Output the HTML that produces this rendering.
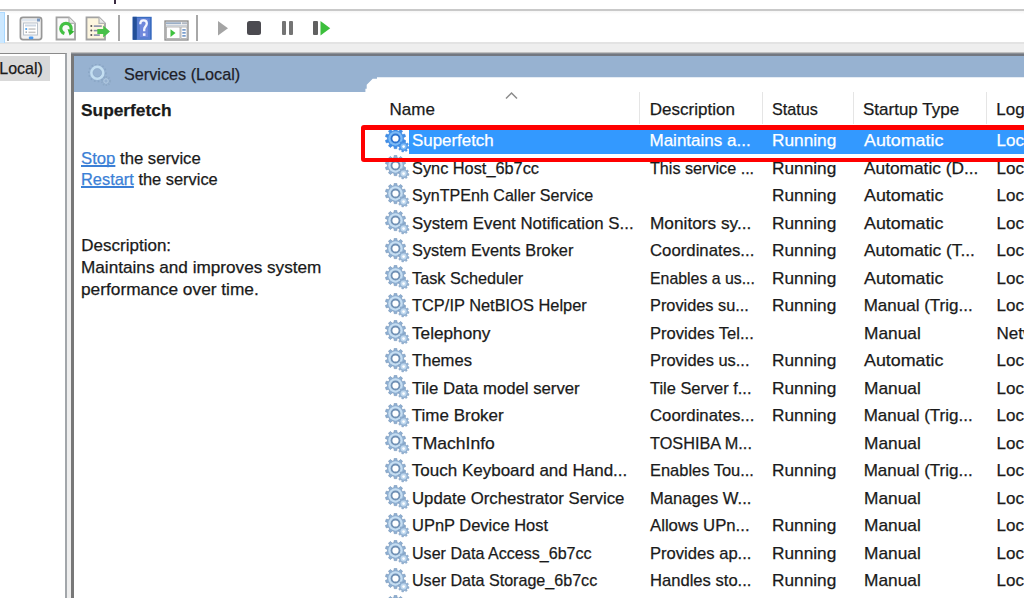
<!DOCTYPE html>
<html><head><meta charset="utf-8">
<style>
*{margin:0;padding:0;box-sizing:border-box}
html,body{width:1024px;height:598px;overflow:hidden;background:#eeeeee;font-family:"Liberation Sans",sans-serif;font-size:17px;position:relative}
.a{position:absolute}
.t{position:absolute;white-space:nowrap;line-height:20px;font-size:17px;transform-origin:0 0;-webkit-text-stroke:0.25px currentColor}
.lk{color:#3b7fd6;text-decoration:underline;text-decoration-thickness:1.6px;text-underline-offset:1.2px;text-decoration-skip-ink:none}
svg.g{position:absolute;width:25px;height:25px;overflow:visible}
</style></head><body>
<svg width="0" height="0" style="position:absolute">
<defs>
 <symbol id="gear" viewBox="0 0 25 25">
  <path d="M9.00 2.64L9.22 0.38L11.78 0.38L12.00 2.64L13.91 3.26L15.41 1.56L17.48 3.06L16.33 5.02L17.51 6.65L19.73 6.16L20.52 8.59L18.44 9.50L18.44 11.50L20.52 12.41L19.73 14.84L17.51 14.35L16.33 15.98L17.48 17.94L15.41 19.44L13.91 17.74L12.00 18.36L11.78 20.62L9.22 20.62L9.00 18.36L7.09 17.74L5.59 19.44L3.52 17.94L4.67 15.98L3.49 14.35L1.27 14.84L0.48 12.41L2.56 11.50L2.56 9.50L0.48 8.59L1.27 6.16L3.49 6.65L4.67 5.02L3.52 3.06L5.59 1.56L7.09 3.26Z" fill="#8fb0d3" stroke="#7898bc" stroke-width="0.7"/>
  <circle cx="10.5" cy="10.5" r="7.2" fill="#c6def2"/>
  <circle cx="10.5" cy="10.5" r="4.9" fill="#7191b5"/>
  <circle cx="10.5" cy="10.5" r="3.1" fill="#fff"/>
  <path d="M22.70 18.45L24.00 18.83L23.66 20.49L22.32 20.33L21.60 21.39L22.25 22.58L20.84 23.51L20.01 22.45L18.75 22.70L18.37 24.00L16.71 23.66L16.87 22.32L15.81 21.60L14.62 22.25L13.69 20.84L14.75 20.01L14.50 18.75L13.20 18.37L13.54 16.71L14.88 16.87L15.60 15.81L14.95 14.62L16.36 13.69L17.19 14.75L18.45 14.50L18.83 13.20L20.49 13.54L20.33 14.88L21.39 15.60L22.58 14.95L23.51 16.36L22.45 17.19Z" fill="#93b3d4" stroke="#7898bc" stroke-width="0.5"/>
  <circle cx="18.6" cy="18.6" r="3" fill="#c0d8ee"/>
  <circle cx="18.6" cy="18.6" r="1.3" fill="#fff"/>
 </symbol>
 <symbol id="gs" viewBox="0 0 25 25">
  <path d="M9.00 2.64L9.22 0.38L11.78 0.38L12.00 2.64L13.91 3.26L15.41 1.56L17.48 3.06L16.33 5.02L17.51 6.65L19.73 6.16L20.52 8.59L18.44 9.50L18.44 11.50L20.52 12.41L19.73 14.84L17.51 14.35L16.33 15.98L17.48 17.94L15.41 19.44L13.91 17.74L12.00 18.36L11.78 20.62L9.22 20.62L9.00 18.36L7.09 17.74L5.59 19.44L3.52 17.94L4.67 15.98L3.49 14.35L1.27 14.84L0.48 12.41L2.56 11.50L2.56 9.50L0.48 8.59L1.27 6.16L3.49 6.65L4.67 5.02L3.52 3.06L5.59 1.56L7.09 3.26Z" fill="#3f8ee8" stroke="#3a84dc" stroke-width="0.7"/>
  <circle cx="10.5" cy="10.5" r="7.2" fill="#7cbaf6"/>
  <circle cx="10.5" cy="10.5" r="4.9" fill="#2e74d0"/>
  <circle cx="10.5" cy="10.5" r="3.1" fill="#fff"/>
  <path d="M22.70 18.45L24.00 18.83L23.66 20.49L22.32 20.33L21.60 21.39L22.25 22.58L20.84 23.51L20.01 22.45L18.75 22.70L18.37 24.00L16.71 23.66L16.87 22.32L15.81 21.60L14.62 22.25L13.69 20.84L14.75 20.01L14.50 18.75L13.20 18.37L13.54 16.71L14.88 16.87L15.60 15.81L14.95 14.62L16.36 13.69L17.19 14.75L18.45 14.50L18.83 13.20L20.49 13.54L20.33 14.88L21.39 15.60L22.58 14.95L23.51 16.36L22.45 17.19Z" fill="#4a96ea" stroke="#3a84dc" stroke-width="0.5"/>
  <circle cx="18.6" cy="18.6" r="3" fill="#80bcf6"/>
  <circle cx="18.6" cy="18.6" r="1.3" fill="#fff"/>
 </symbol>
</defs>
</svg>

<!-- top strip (menu bar remnant) -->
<div class="a" style="left:0;top:0;width:1024px;height:9px;background:#fff"></div>
<div class="a" style="left:114px;top:0;width:2px;height:4px;background:#3a2a40"></div>
<div class="a" style="left:0;top:9px;width:1024px;height:2px;background:#c9c9c9"></div>
<!-- toolbar -->
<div class="a" style="left:0;top:11px;width:1024px;height:31px;background:linear-gradient(#f6f6f6,#fff 3px)"></div>
<div class="a" style="left:0;top:42px;width:1024px;height:2px;background:#e3e3e3"></div>
<div class="a" style="left:0;top:44px;width:1024px;height:9px;background:#eeeeee"></div>
<div class="a" style="left:0;top:12px;width:4.5px;height:30.5px;background:#cce8ff;border-right:1px solid #a8d8ff;border-top:1px solid #b0dbff"></div>
<div class="a" style="left:6.8px;top:15px;width:1.8px;height:26px;background:#a4a4a4"></div>
<div class="a" style="left:118px;top:15px;width:2px;height:26px;background:#a8a8a8"></div>
<div class="a" style="left:196px;top:15px;width:2px;height:26px;background:#a8a8a8"></div>
<!-- icon1 properties -->
<svg class="a" style="left:19px;top:16px" width="24" height="25" viewBox="0 0 24 25">
 <rect x="1.4" y="1.3" width="21.2" height="22.4" rx="2.6" fill="#f3f3f3" stroke="#979797" stroke-width="1.7"/>
 <rect x="3" y="3" width="15" height="2" fill="#dfe6ee"/>
 <rect x="18" y="2.5" width="3" height="3" fill="#7a98c0"/>
 <rect x="4.5" y="7" width="14" height="12" fill="#fff" stroke="#b9c2cc" stroke-width="1"/>
 <rect x="6" y="8.5" width="11" height="2" fill="#cdd7e3"/>
 <circle cx="7.2" cy="13" r="1.1" fill="#4aa0f0"/>
 <rect x="9.5" y="12.3" width="7" height="1.5" fill="#c4c4c4"/>
 <rect x="6.6" y="15.4" width="1.2" height="1.5" fill="#909090"/>
 <rect x="9.5" y="15.6" width="7" height="1.5" fill="#c4c4c4"/>
 <rect x="9.8" y="20.4" width="4.6" height="2.8" rx="1.2" fill="#4b9af0"/>
</svg>
<!-- icon2 refresh -->
<svg class="a" style="left:55px;top:16px" width="22" height="25" viewBox="0 0 22 25">
 <path d="M1.5 1.3H14L20 7.3V23.5H1.5Z" fill="#fafafa" stroke="#a2a2a2" stroke-width="1.8"/>
 <path d="M14 1.3V7.3H20" fill="#e6e6e6" stroke="#b4b4b4" stroke-width="1.2"/>
 <path d="M9.42 17.49A5.2 5.2 0 1 1 15.6 14.9" fill="none" stroke="#44c044" stroke-width="3.2"/>
 <path d="M12.6 13.0L19.3 15.4L14.6 19.6Z" fill="#33b533"/>
</svg>
<!-- icon3 export -->
<svg class="a" style="left:85px;top:16px" width="27" height="25" viewBox="0 0 27 25">
 <path d="M1.5 1.3H14L20 7.3V23.5H1.5Z" fill="#fdf6df" stroke="#a2a2a2" stroke-width="1.8"/>
 <path d="M14 1.3V7.3H20" fill="#e8e8e8" stroke="#b4b4b4" stroke-width="1.2"/>
 <circle cx="6.3" cy="10" r="1" fill="#505050"/>
 <circle cx="6.3" cy="14.5" r="1" fill="#505050"/>
 <circle cx="6.3" cy="19" r="1" fill="#505050"/>
 <rect x="8.8" y="9.3" width="8" height="1.6" fill="#8a90a8"/>
 <rect x="8.8" y="13.8" width="6" height="1.6" fill="#8a90a8"/>
 <rect x="8.8" y="18.3" width="6" height="1.6" fill="#8a90a8"/>
 <path d="M12.3 13H18.2V9.6L25 15.5L18.2 21.4V18H12.3Z" fill="#48c048"/>
</svg>
<!-- help -->
<svg class="a" style="left:132px;top:16px" width="21" height="25" viewBox="0 0 21 25">
 <rect x="0.7" y="0.8" width="19" height="23" fill="#3a6cc0"/>
 <rect x="0.7" y="0.8" width="4" height="23" fill="#234f98"/>
 <rect x="5" y="2" width="13" height="21" fill="#5a7ed2"/>
 <rect x="8" y="3" width="8" height="18" fill="#7088dc"/>
 <path d="M8.3 8.2C8.3 5.6 9.8 4.3 11.5 4.3C13.4 4.3 14.8 5.6 14.8 7.6C14.8 10.3 12.2 10.8 12.2 13.4V15.2" fill="none" stroke="#f4f6ff" stroke-width="2.3"/>
 <rect x="10.9" y="17.3" width="2.6" height="2.6" fill="#f4f6ff"/>
</svg>
<!-- window w/ play -->
<svg class="a" style="left:164px;top:20px" width="25" height="21" viewBox="0 0 25 21">
 <rect x="1" y="1" width="23" height="19" fill="#eeeeee" stroke="#8a8a8a" stroke-width="1.3"/>
 <rect x="2" y="2.3" width="15" height="1.8" fill="#9aaec6"/>
 <rect x="18" y="2.3" width="5" height="1.8" fill="#b0b8c4"/>
 <rect x="2" y="5" width="21" height="1.2" fill="#c8d0da"/>
 <rect x="2.5" y="7" width="13.5" height="11.5" fill="#fff" stroke="#a8a8a8" stroke-width="0.8"/>
 <rect x="17" y="7" width="6" height="11.5" fill="#fff" stroke="#a8a8a8" stroke-width="0.8"/>
 <path d="M6.5 9.3L11.5 13L6.5 17Z" fill="#3fc23f"/>
 <rect x="18.3" y="9.2" width="3.4" height="1.4" fill="#5a86c0"/>
 <rect x="18.3" y="12.2" width="3.4" height="1.4" fill="#5a86c0"/>
 <rect x="18.3" y="15.2" width="3.4" height="1.4" fill="#5a86c0"/>
</svg>
<!-- play/stop/pause/resume -->
<svg class="a" style="left:217px;top:20px" width="12" height="17" viewBox="0 0 12 17"><path d="M1 1L11 8.3L1 15.5Z" fill="#a4a4a4"/></svg>
<div class="a" style="left:246.7px;top:21px;width:14.6px;height:14.3px;background:#4b4a50;border-radius:2.5px"></div>
<div class="a" style="left:281.6px;top:21px;width:4.5px;height:14.3px;background:#747474;border-radius:1px"></div>
<div class="a" style="left:288.7px;top:21px;width:4.5px;height:14.3px;background:#747474;border-radius:1px"></div>
<div class="a" style="left:313.3px;top:21px;width:4.8px;height:14.3px;background:#616161;border-radius:1px"></div>
<svg class="a" style="left:320px;top:20px" width="11" height="17" viewBox="0 0 11 17"><path d="M0.5 1L10.2 8.3L0.5 15.5Z" fill="#3cbf3c"/></svg>

<!-- left tree panel -->
<div class="a" style="left:0;top:53px;width:67px;height:545px;background:#fff;border-top:1px solid #8a8a8a;border-right:2px solid #a2a6aa"></div>
<div class="a" style="left:0;top:56px;width:50px;height:25px;background:#d9d9d9"></div>
<!-- main panel -->
<div class="a" style="left:71px;top:53px;width:953px;height:545px;background:#fff;border-left:3px solid #787878;border-top:3px solid #727780"></div>
<div class="a" style="left:71px;top:52px;width:953px;height:1px;background:#c0c0c0"></div>
<div class="a" style="left:71px;top:53px;width:953px;height:1px;background:#8c9096"></div>
<div class="a" style="left:74px;top:56px;width:950px;height:36px;background:#97b2d1"></div>
<div class="a" style="left:365px;top:77px;width:659px;height:521px;background:#fff;clip-path:polygon(12px 0.3px,100% 0.3px,100% 100%,0.4px 100%,0.4px 11.7px,1.7px 11.7px,1.7px 7.7px,7.7px 1.7px,12px 1.7px)"></div>
<svg class="a" style="left:88px;top:64px" width="24" height="24" viewBox="0 0 24 24">
 <circle cx="9.3" cy="8.8" r="8.6" fill="none" stroke="#86a2c2" stroke-width="1.6" stroke-dasharray="1.6 2.2" opacity="0.8"/>
 <circle cx="18" cy="17" r="4" fill="none" stroke="#8ea9c6" stroke-width="2.2" stroke-dasharray="1.3 1.3"/>
 <circle cx="18" cy="17" r="2.2" fill="none" stroke="#b4cce2" stroke-width="1"/>
 <circle cx="9.3" cy="8.8" r="5.8" fill="none" stroke="#c8e2f4" stroke-width="2.8" opacity="0.9"/>
 <circle cx="9.3" cy="8.8" r="4.3" fill="none" stroke="#8aa6c4" stroke-width="0.6"/>
</svg>
<div class="t" style="left:80.9px;top:101.4px;color:#1a1a1a;transform:scaleX(1.0191);font-weight:bold;">Superfetch</div>
<div class="t" style="left:124.0px;top:65.1px;color:#1e1e28;transform:scaleX(0.9533);">Services (Local)</div>
<div class="t" style="left:-72.0px;top:59.3px;color:#1a1a1a;transform:scaleX(0.9426);">Services (Local)</div>
<div class="t" style="left:81.0px;top:148.6px;color:#1a1a1a;transform:scaleX(0.9820);"><span class="lk">Stop</span> the service</div>
<div class="t" style="left:81.0px;top:170.3px;color:#1a1a1a;transform:scaleX(0.9648);"><span class="lk">Restart</span> the service</div>
<div class="t" style="left:81.3px;top:236.0px;color:#1a1a1a;">Description:</div>
<div class="t" style="left:81.0px;top:258.2px;color:#1a1a1a;transform:scaleX(1.0097);">Maintains and improves system</div>
<div class="t" style="left:81.0px;top:279.5px;color:#1a1a1a;transform:scaleX(1.0171);">performance over time.</div>
<!-- list header -->
<div class="a" style="left:639px;top:92px;width:1px;height:32px;background:#e5e5e5"></div>
<div class="a" style="left:762px;top:92px;width:1px;height:32px;background:#e5e5e5"></div>
<div class="a" style="left:853px;top:92px;width:1px;height:32px;background:#e5e5e5"></div>
<div class="a" style="left:986px;top:92px;width:1px;height:32px;background:#e5e5e5"></div>
<svg class="a" style="left:504px;top:91px" width="15" height="9" viewBox="0 0 15 9"><path d="M2 7.5L7.5 2L13 7.5" fill="none" stroke="#8c8c8c" stroke-width="1.5"/></svg>
<div class="t" style="left:389.6px;top:100.0px;color:#1a1a1a;">Name</div>
<div class="t" style="left:649.8px;top:100.3px;color:#1a1a1a;">Description</div>
<div class="t" style="left:772.3px;top:100.0px;color:#1a1a1a;transform:scaleX(0.9521);">Status</div>
<div class="t" style="left:863.0px;top:99.6px;color:#1a1a1a;">Startup Type</div>
<div class="t" style="left:996.3px;top:99.6px;color:#1a1a1a;">Log On As</div>
<!-- selection -->
<div class="a" style="left:409px;top:130px;width:615px;height:24px;background:#3399ff"></div>
<svg class="g" style="left:385px;top:127.7px"><use href="#gs"/></svg>
<div class="t" style="left:411.8px;top:131.0px;color:#ffffff;transform:scaleX(0.9939);">Superfetch</div>
<div class="t" style="left:649.5px;top:131.0px;color:#ffffff;">Maintains a...</div>
<div class="t" style="left:772.3px;top:131.0px;color:#ffffff;transform:scaleX(1.0143);">Running</div>
<div class="t" style="left:863.7px;top:131.0px;color:#ffffff;transform:scaleX(1.0500);">Automatic</div>
<div class="t" style="left:996.5px;top:131.0px;color:#ffffff;">Local System</div>
<svg class="g" style="left:385px;top:155.2px"><use href="#gear"/></svg>
<div class="t" style="left:411.8px;top:158.5px;color:#1a1a1a;transform:scaleX(0.9602);">Sync Host_6b7cc</div>
<div class="t" style="left:649.5px;top:158.5px;color:#1a1a1a;transform:scaleX(0.9500);">This service ...</div>
<div class="t" style="left:772.3px;top:158.5px;color:#1a1a1a;transform:scaleX(1.0143);">Running</div>
<div class="t" style="left:863.7px;top:158.5px;color:#1a1a1a;transform:scaleX(1.0170);">Automatic (D...</div>
<div class="t" style="left:996.5px;top:158.5px;color:#1a1a1a;">Local System</div>
<svg class="g" style="left:385px;top:182.7px"><use href="#gear"/></svg>
<div class="t" style="left:411.8px;top:186.0px;color:#1a1a1a;transform:scaleX(0.9453);">SynTPEnh Caller Service</div>
<div class="t" style="left:772.3px;top:186.0px;color:#1a1a1a;transform:scaleX(1.0143);">Running</div>
<div class="t" style="left:863.7px;top:186.0px;color:#1a1a1a;transform:scaleX(1.0500);">Automatic</div>
<div class="t" style="left:996.5px;top:186.0px;color:#1a1a1a;">Local System</div>
<svg class="g" style="left:385px;top:210.2px"><use href="#gear"/></svg>
<div class="t" style="left:411.8px;top:213.5px;color:#1a1a1a;transform:scaleX(0.9897);">System Event Notification S...</div>
<div class="t" style="left:649.5px;top:213.5px;color:#1a1a1a;transform:scaleX(1.0150);">Monitors sy...</div>
<div class="t" style="left:772.3px;top:213.5px;color:#1a1a1a;transform:scaleX(1.0143);">Running</div>
<div class="t" style="left:863.7px;top:213.5px;color:#1a1a1a;transform:scaleX(1.0500);">Automatic</div>
<div class="t" style="left:996.5px;top:213.5px;color:#1a1a1a;">Local System</div>
<svg class="g" style="left:385px;top:237.7px"><use href="#gear"/></svg>
<div class="t" style="left:411.8px;top:241.0px;color:#1a1a1a;transform:scaleX(0.9595);">System Events Broker</div>
<div class="t" style="left:649.5px;top:241.0px;color:#1a1a1a;transform:scaleX(0.9858);">Coordinates...</div>
<div class="t" style="left:772.3px;top:241.0px;color:#1a1a1a;transform:scaleX(1.0143);">Running</div>
<div class="t" style="left:863.7px;top:241.0px;color:#1a1a1a;transform:scaleX(1.0211);">Automatic (T...</div>
<div class="t" style="left:996.5px;top:241.0px;color:#1a1a1a;">Local System</div>
<svg class="g" style="left:385px;top:265.2px"><use href="#gear"/></svg>
<div class="t" style="left:411.8px;top:268.5px;color:#1a1a1a;transform:scaleX(0.9564);">Task Scheduler</div>
<div class="t" style="left:649.5px;top:268.5px;color:#1a1a1a;transform:scaleX(0.9330);">Enables a us...</div>
<div class="t" style="left:772.3px;top:268.5px;color:#1a1a1a;transform:scaleX(1.0143);">Running</div>
<div class="t" style="left:863.7px;top:268.5px;color:#1a1a1a;transform:scaleX(1.0500);">Automatic</div>
<div class="t" style="left:996.5px;top:268.5px;color:#1a1a1a;">Local System</div>
<svg class="g" style="left:385px;top:292.7px"><use href="#gear"/></svg>
<div class="t" style="left:411.8px;top:296.0px;color:#1a1a1a;transform:scaleX(0.9652);">TCP/IP NetBIOS Helper</div>
<div class="t" style="left:649.5px;top:296.0px;color:#1a1a1a;transform:scaleX(0.9592);">Provides su...</div>
<div class="t" style="left:772.3px;top:296.0px;color:#1a1a1a;transform:scaleX(1.0143);">Running</div>
<div class="t" style="left:863.7px;top:296.0px;color:#1a1a1a;">Manual (Trig...</div>
<div class="t" style="left:996.5px;top:296.0px;color:#1a1a1a;">Local System</div>
<svg class="g" style="left:385px;top:320.2px"><use href="#gear"/></svg>
<div class="t" style="left:411.8px;top:323.5px;color:#1a1a1a;transform:scaleX(1.0115);">Telephony</div>
<div class="t" style="left:649.5px;top:323.5px;color:#1a1a1a;transform:scaleX(0.9745);">Provides Tel...</div>
<div class="t" style="left:863.7px;top:323.5px;color:#1a1a1a;transform:scaleX(1.0179);">Manual</div>
<div class="t" style="left:996.5px;top:323.5px;color:#1a1a1a;">Network Service</div>
<svg class="g" style="left:385px;top:347.7px"><use href="#gear"/></svg>
<div class="t" style="left:411.8px;top:351.0px;color:#1a1a1a;transform:scaleX(0.9770);">Themes</div>
<div class="t" style="left:649.5px;top:351.0px;color:#1a1a1a;transform:scaleX(0.9660);">Provides us...</div>
<div class="t" style="left:772.3px;top:351.0px;color:#1a1a1a;transform:scaleX(1.0143);">Running</div>
<div class="t" style="left:863.7px;top:351.0px;color:#1a1a1a;transform:scaleX(1.0500);">Automatic</div>
<div class="t" style="left:996.5px;top:351.0px;color:#1a1a1a;">Local System</div>
<svg class="g" style="left:385px;top:375.2px"><use href="#gear"/></svg>
<div class="t" style="left:411.8px;top:378.5px;color:#1a1a1a;transform:scaleX(0.9842);">Tile Data model server</div>
<div class="t" style="left:649.5px;top:378.5px;color:#1a1a1a;transform:scaleX(0.9648);">Tile Server f...</div>
<div class="t" style="left:772.3px;top:378.5px;color:#1a1a1a;transform:scaleX(1.0143);">Running</div>
<div class="t" style="left:863.7px;top:378.5px;color:#1a1a1a;transform:scaleX(1.0179);">Manual</div>
<div class="t" style="left:996.5px;top:378.5px;color:#1a1a1a;">Local System</div>
<svg class="g" style="left:385px;top:402.7px"><use href="#gear"/></svg>
<div class="t" style="left:411.8px;top:406.0px;color:#1a1a1a;">Time Broker</div>
<div class="t" style="left:649.5px;top:406.0px;color:#1a1a1a;transform:scaleX(0.9858);">Coordinates...</div>
<div class="t" style="left:772.3px;top:406.0px;color:#1a1a1a;transform:scaleX(1.0143);">Running</div>
<div class="t" style="left:863.7px;top:406.0px;color:#1a1a1a;">Manual (Trig...</div>
<div class="t" style="left:996.5px;top:406.0px;color:#1a1a1a;">Local System</div>
<svg class="g" style="left:385px;top:430.2px"><use href="#gear"/></svg>
<div class="t" style="left:411.8px;top:433.5px;color:#1a1a1a;transform:scaleX(1.0312);">TMachInfo</div>
<div class="t" style="left:649.5px;top:433.5px;color:#1a1a1a;transform:scaleX(0.9575);">TOSHIBA M...</div>
<div class="t" style="left:863.7px;top:433.5px;color:#1a1a1a;transform:scaleX(1.0179);">Manual</div>
<div class="t" style="left:996.5px;top:433.5px;color:#1a1a1a;">Local System</div>
<svg class="g" style="left:385px;top:457.7px"><use href="#gear"/></svg>
<div class="t" style="left:411.8px;top:461.0px;color:#1a1a1a;">Touch Keyboard and Hand...</div>
<div class="t" style="left:649.5px;top:461.0px;color:#1a1a1a;transform:scaleX(0.9673);">Enables Tou...</div>
<div class="t" style="left:772.3px;top:461.0px;color:#1a1a1a;transform:scaleX(1.0143);">Running</div>
<div class="t" style="left:863.7px;top:461.0px;color:#1a1a1a;">Manual (Trig...</div>
<div class="t" style="left:996.5px;top:461.0px;color:#1a1a1a;">Local System</div>
<svg class="g" style="left:385px;top:485.2px"><use href="#gear"/></svg>
<div class="t" style="left:411.8px;top:488.5px;color:#1a1a1a;transform:scaleX(0.9860);">Update Orchestrator Service</div>
<div class="t" style="left:649.5px;top:488.5px;color:#1a1a1a;transform:scaleX(0.9760);">Manages W...</div>
<div class="t" style="left:863.7px;top:488.5px;color:#1a1a1a;transform:scaleX(1.0179);">Manual</div>
<div class="t" style="left:996.5px;top:488.5px;color:#1a1a1a;">Local System</div>
<svg class="g" style="left:385px;top:512.7px"><use href="#gear"/></svg>
<div class="t" style="left:411.8px;top:516.0px;color:#1a1a1a;transform:scaleX(0.9688);">UPnP Device Host</div>
<div class="t" style="left:649.5px;top:516.0px;color:#1a1a1a;transform:scaleX(0.9851);">Allows UPn...</div>
<div class="t" style="left:772.3px;top:516.0px;color:#1a1a1a;transform:scaleX(1.0143);">Running</div>
<div class="t" style="left:863.7px;top:516.0px;color:#1a1a1a;transform:scaleX(1.0179);">Manual</div>
<div class="t" style="left:996.5px;top:516.0px;color:#1a1a1a;">Local System</div>
<svg class="g" style="left:385px;top:540.2px"><use href="#gear"/></svg>
<div class="t" style="left:411.8px;top:543.5px;color:#1a1a1a;transform:scaleX(0.9458);">User Data Access_6b7cc</div>
<div class="t" style="left:649.5px;top:543.5px;color:#1a1a1a;transform:scaleX(0.9760);">Provides ap...</div>
<div class="t" style="left:772.3px;top:543.5px;color:#1a1a1a;transform:scaleX(1.0143);">Running</div>
<div class="t" style="left:863.7px;top:543.5px;color:#1a1a1a;transform:scaleX(1.0179);">Manual</div>
<div class="t" style="left:996.5px;top:543.5px;color:#1a1a1a;">Local System</div>
<svg class="g" style="left:385px;top:567.7px"><use href="#gear"/></svg>
<div class="t" style="left:411.8px;top:571.0px;color:#1a1a1a;transform:scaleX(0.9469);">User Data Storage_6b7cc</div>
<div class="t" style="left:649.5px;top:571.0px;color:#1a1a1a;transform:scaleX(0.9760);">Handles sto...</div>
<div class="t" style="left:772.3px;top:571.0px;color:#1a1a1a;transform:scaleX(1.0143);">Running</div>
<div class="t" style="left:863.7px;top:571.0px;color:#1a1a1a;transform:scaleX(1.0179);">Manual</div>
<div class="t" style="left:996.5px;top:571.0px;color:#1a1a1a;">Local System</div>
<svg class="g" style="left:385px;top:595.2px"><use href="#gear"/></svg>
<!-- red highlight box -->
<div class="a" style="left:361px;top:125px;width:680px;height:37px;border:4.2px solid #ff0000;border-top-width:5px;border-radius:3px"></div>
</body></html>
